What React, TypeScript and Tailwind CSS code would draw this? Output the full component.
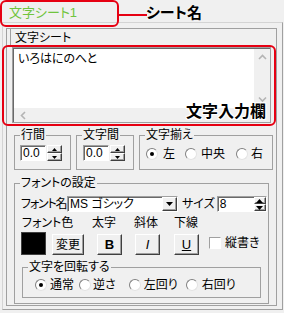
import React from "react";

const RAISED =
  "bg-[#f0f0f0] border border-t-white border-l-white border-r-[#404040] border-b-[#404040] shadow-[inset_-1px_-1px_0_#a0a0a0]";
const SUNKEN =
  "bg-white border border-t-[#a0a0a0] border-l-[#a0a0a0] border-r-white border-b-white shadow-[inset_1px_1px_0_#696969]";

function Tri({ up, w = 5, h = 3, color = "#000" }: { up: boolean; w?: number; h?: number; color?: string }) {
  return (
    <svg width={w} height={h} viewBox={`0 0 ${w} ${h}`}>
      {up ? (
        <polygon points={`0,${h} ${w},${h} ${w / 2},0`} fill={color} />
      ) : (
        <polygon points={`0,0 ${w},0 ${w / 2},${h}`} fill={color} />
      )}
    </svg>
  );
}

function Chevron({ dir }: { dir: "up" | "down" | "left" }) {
  const d =
    dir === "up" ? "M1 5 L4.5 1.5 L8 5" : dir === "down" ? "M1 1.5 L4.5 5 L8 1.5" : "M5 1 L1.5 4.5 L5 8";
  const w = dir === "left" ? 7 : 9;
  const h = dir === "left" ? 9 : 7;
  return (
    <svg width={w} height={h} viewBox={`0 0 ${w} ${h}`}>
      <path d={d} stroke="#b4b4b4" strokeWidth="1.6" fill="none" />
    </svg>
  );
}

function Group({
  label,
  className,
  children,
}: {
  label: string;
  className: string;
  children?: React.ReactNode;
}) {
  return (
    <fieldset className={"border border-[#a0a0a0] " + className}>
      <legend className="ml-[5px] px-[1px] text-[12px] leading-[12px]">{label}</legend>
      {children}
    </fieldset>
  );
}

function SmallSpin({ value, ml }: { value: string; ml: string }) {
  return (
    <div className={"flex mt-[4px] h-[16px] " + ml}>
      <div className={SUNKEN + " w-[26px] h-[16px] pl-[2px] text-[12px] leading-[14px]"}>{value}</div>
      <div className="ml-[1px] w-[15px] h-[16px] flex flex-col">
        <div className={RAISED + " h-[8px] flex items-center justify-center"}>
          <Tri up />
        </div>
        <div className={RAISED + " h-[8px] flex items-center justify-center"}>
          <Tri up={false} />
        </div>
      </div>
    </div>
  );
}

function Radio({ on, ml }: { on?: boolean; ml: string }) {
  return (
    <div
      className={
        "w-[12px] h-[12px] shrink-0 rounded-full bg-white border border-t-[#808080] border-l-[#808080] border-r-[#e3e3e3] border-b-[#e3e3e3] flex items-center justify-center " +
        ml
      }
    >
      {on && <div className="w-[4px] h-[4px] rounded-full bg-black" />}
    </div>
  );
}

export default function App() {
  return (
    <div className="relative w-[284px] h-[313px] overflow-hidden bg-[#f0f0f0] text-black text-[12px] leading-[14px] font-['Liberation_Sans','Noto_Sans_CJK_JP',sans-serif] [font-feature-settings:'palt']">
      {/* tab strip */}
      <div className="h-[22px] flex">
        <div className="w-[118px] pl-[9px] pt-[5px] text-[13px] leading-[15px] text-[#70c43e]">文字シート1</div>
      </div>

      {/* outer frame */}
      <div className="ml-[2px] w-[281px] h-[288px] border border-[#d4d4d4] border-r-[#a0a0a0] border-b-[#a0a0a0] pl-[3px] pt-[5px]">
        <div className="w-[271px] h-[278px] border border-[#a0a0a0] flex flex-col">
          {/* header */}
          <div className="ml-[3px] h-[17px] border-l border-[#a0a0a0] pl-[4px] pt-[2px]">文字シート</div>

          {/* textarea */}
          <div className="ml-[5px] mt-[1px] w-[259px] h-[76px] bg-white border border-[#a0a0a0] flex flex-col">
            <div className="flex-1 flex border-l border-t border-[#696969]">
              <div className="flex-1 pl-[4px] pt-[3px]">いろはにのへと</div>
              <div className="w-[16px] bg-[#f0f0f0] flex flex-col items-center justify-between py-[5px]">
                <Chevron dir="up" />
                <Chevron dir="down" />
              </div>
            </div>
            <div className="h-[14px] bg-[#f0f0f0] flex items-center pl-[6px] border-l border-[#696969]">
              <Chevron dir="left" />
            </div>
          </div>

          {/* groups row */}
          <div className="mt-[6px] ml-[7px] flex gap-[5px]">
            <Group label="行間" className="w-[57px] h-[41px]">
              <SmallSpin value="0.0" ml="ml-[5px]" />
            </Group>
            <Group label="文字間" className="w-[58px] h-[41px]">
              <SmallSpin value="0.0" ml="ml-[6px]" />
            </Group>
            <Group label="文字揃え" className="w-[134px] h-[41px]">
              <div className="mt-[6px] flex items-center h-[13px]">
                <Radio on ml="ml-[6px]" />
                <span className="ml-[5px]">左</span>
                <Radio ml="ml-[10px]" />
                <span className="ml-[4px]">中央</span>
                <Radio ml="ml-[11px]" />
                <span className="ml-[3px]">右</span>
              </div>
            </Group>
          </div>

          {/* font group */}
          <Group label="フォントの設定" className="mt-[7px] ml-[7px] w-[255px] h-[127px]">
            {/* row 1 */}
            <div className="mt-[7px] ml-[6px] flex items-center h-[16px]">
              <span className="w-[46px] shrink-0 whitespace-nowrap tracking-[-1.2px]">フォント名</span>
              <div className={SUNKEN + " w-[111px] h-[16px] flex"}>
                <div className="flex-1 pl-[2px] leading-[14px] whitespace-nowrap">MS ゴシック</div>
                <div className={RAISED + " w-[15px] h-full flex items-center justify-center"}>
                  <Tri up={false} w={7} h={4} />
                </div>
              </div>
              <span className="ml-[4px] whitespace-nowrap">サイズ</span>
              <div className={SUNKEN + " ml-[2px] w-[50px] h-[16px] flex"}>
                <div className="flex-1 pl-[2px] leading-[14px]">8</div>
                <div className="w-[12px] h-full flex flex-col">
                  <div className={RAISED + " h-1/2 flex items-center justify-center"}>
                    <Tri up w={7} h={4} />
                  </div>
                  <div className={RAISED + " h-1/2 flex items-center justify-center"}>
                    <Tri up={false} w={7} h={4} />
                  </div>
                </div>
              </div>
            </div>

            {/* row 2 labels */}
            <div className="mt-[5px] ml-[7px] flex h-[13px] leading-[13px] whitespace-nowrap">
              <span className="w-[70px]">フォント色</span>
              <span className="w-[42px]">太字</span>
              <span className="w-[40px]">斜体</span>
              <span>下線</span>
            </div>

            {/* row 3 */}
            <div className="mt-[2px] ml-[6px] flex items-end h-[23px]">
              <div className="w-[25px] h-[23px] bg-black border border-[#404040]" />
              <div className={RAISED + " ml-[6px] w-[32px] h-[21px] flex items-center justify-center"}>変更</div>
              <div className={RAISED + " ml-[13px] w-[25px] h-[21px] flex items-center justify-center font-bold text-[13px]"}>
                B
              </div>
              <div className={RAISED + " ml-[13px] w-[25px] h-[21px] flex items-center justify-center italic text-[13px]"}>
                I
              </div>
              <div className={RAISED + " ml-[14px] w-[25px] h-[21px] flex items-center justify-center underline text-[13px]"}>
                U
              </div>
              <div className="ml-[10px] mb-[5px] flex items-center">
                <div className={SUNKEN + " w-[12px] h-[12px] shadow-none"} />
                <span className="ml-[4px] whitespace-nowrap">縦書き</span>
              </div>
            </div>

            {/* rotation group */}
            <Group label="文字を回転する" className="mt-[6px] ml-[7px] w-[239px] h-[37px]">
              <div className="mt-[5px] flex items-center h-[13px] whitespace-nowrap">
                <Radio on ml="ml-[12px]" />
                <span className="ml-[3px]">通常</span>
                <Radio ml="ml-[5px]" />
                <span className="ml-[2px]">逆さ</span>
                <Radio ml="ml-[13px]" />
                <span className="ml-[3px]">左回り</span>
                <Radio ml="ml-[8px]" />
                <span className="ml-[4px]">右回り</span>
              </div>
            </Group>
          </Group>
        </div>
      </div>

      {/* annotations */}
      <div className="absolute left-0 top-0 w-[119px] h-[27px] border-2 border-[#e60012] rounded-[6px]" />
      <div className="absolute left-[119px] top-[14px] w-[28px] h-[2px] bg-[#e60012]" />
      <div className="absolute left-[146px] top-[4px] text-[15px] leading-[18px] font-bold [text-shadow:0_0_2px_#fff]">
        シート名
      </div>
      <div className="absolute left-[2px] top-[45px] w-[274px] h-[81px] border-2 border-[#e60012] rounded-[6px]" />
      <div className="absolute left-[186px] top-[102px] text-[16px] leading-[19px] font-bold [text-shadow:1px_0_0_#fff,-1px_0_0_#fff,0_1px_0_#fff,0_-1px_0_#fff,1px_1px_0_#fff,-1px_-1px_0_#fff,1px_-1px_0_#fff,-1px_1px_0_#fff]">
        文字入力欄
      </div>
    </div>
  );
}
